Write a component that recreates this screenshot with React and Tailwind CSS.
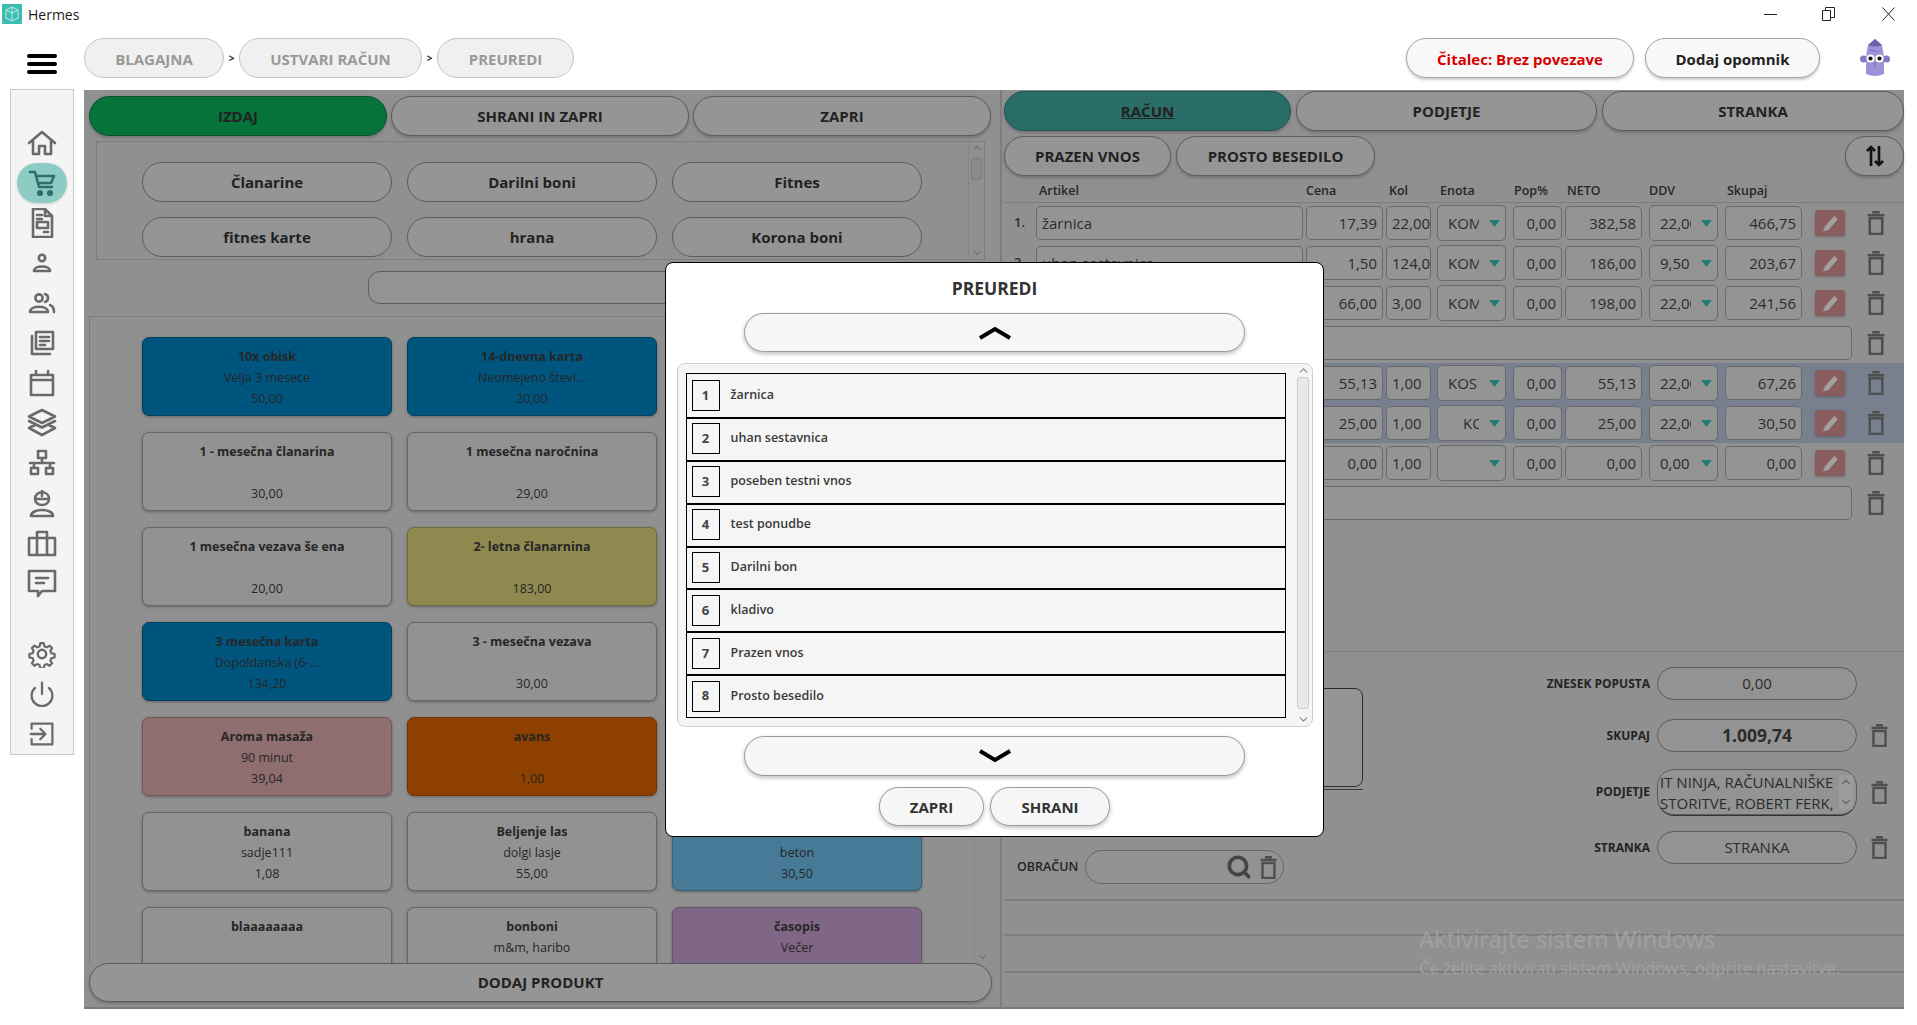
import { ChevronUp, ChevronDown, Search } from 'lucide-react';

const pillBtn = 'flex items-center justify-center rounded-[20px] border border-[#5c5c5c] bg-[#959595] font-bold text-[#222] shadow-[0_2px_3px_rgba(0,0,0,0.2)]';
const cell = 'flex h-[34px] items-center overflow-hidden rounded-[5px] border border-[#6a6a6a] bg-[#949494] text-[15px] text-[#2c2c2c]';

const blue = 'bg-[#00557e] border-[#00415f]';

const categories = ['Članarine', 'Darilni boni', 'Fitnes', 'fitnes karte', 'hrana', 'Korona boni'];

const products = [
  { t: '10x obisk', s: 'Velja 3 mesece', p: '50,00', c: blue },
  { t: '14-dnevna karta', s: 'Neomejeno števi...', p: '20,00', c: blue },
  {},
  { t: '1 - mesečna članarina', p: '30,00' },
  { t: '1 mesečna naročnina', p: '29,00' },
  {},
  { t: '1 mesečna vezava še ena', p: '20,00' },
  { t: '2- letna članarnina', p: '183,00', c: 'bg-[#8f8950] border-[#6f6a3a]' },
  {},
  { t: '3 mesečna karta', s: 'Dopoldanska (6-...', p: '134,20', c: blue },
  { t: '3 - mesečna vezava', p: '30,00' },
  {},
  { t: 'Aroma masaža', s: '90 minut', p: '39,04', c: 'bg-[#8f6e70] border-[#735658]' },
  { t: 'avans', p: '1,00', c: 'bg-[#8e4000] border-[#703200]' },
  {},
  { t: 'banana', s: 'sadje111', p: '1,08' },
  { t: 'Beljenje las', s: 'dolgi lasje', p: '55,00' },
  { s: 'beton', p: '30,50', c: 'bg-[#477a96] border-[#386177]' },
  { t: 'blaaaaaaaa' },
  { t: 'bonboni', s: 'm&m, haribo' },
  { t: 'časopis', s: 'Večer', c: 'bg-[#7f6785] border-[#68546d]' },
];

const rows = [
  { n: '1.', name: 'žarnica', v: ['17,39', '22,00', 'KOM', '0,00', '382,58', '22,00', '466,75'] },
  { n: '2.', name: 'uhan sestavnica', v: ['1,50', '124,00', 'KOM', '0,00', '186,00', '9,50', '203,67'] },
  { n: '3.', name: 'poseben testni vnos', v: ['66,00', '3,00', 'KOM', '0,00', '198,00', '22,00', '241,56'] },
  { text: true },
  { n: '5.', name: 'Darilni bon', band: true, v: ['55,13', '1,00', 'KOS', '0,00', '55,13', '22,00', '67,26'] },
  { n: '6.', name: 'kladivo', band: true, shift: true, v: ['25,00', '1,00', 'KOS', '0,00', '25,00', '22,00', '30,50'] },
  { n: '7.', name: 'Prazen vnos', v: ['0,00', '1,00', '', '0,00', '0,00', '0,00', '0,00'] },
  { text: true },
];

const sortItems = ['žarnica', 'uhan sestavnica', 'poseben testni vnos', 'test ponudbe', 'Darilni bon', 'kladivo', 'Prazen vnos', 'Prosto besedilo'];

const I = ({ children, w = 30, h = 30 }) => (
  <svg width={w} height={h} viewBox="0 0 30 30" fill="none" stroke="currentColor" strokeWidth="2.6" strokeLinejoin="round" strokeLinecap="round">
    {children}
  </svg>
);

const navIcons = [
  <I><path d="M2 15 15 4l13 11M6 12v14h6v-8h6v8h6V12" /></I>,
  <I><path d="M3 4h5l4 15h13M9 8h18l-3 7H11" /><circle cx="13" cy="25" r="1.8" fill="currentColor" /><circle cx="23" cy="25" r="1.8" fill="currentColor" /></I>,
  <I><path d="M6 1h12l7 7v21H6zM18 1v7h7M10 7h5M10 11h5M10 14h11v6H10zM17 24h4" /></I>,
  <I><circle cx="15" cy="10" r="3.2" /><path d="M7 23c0-6 16-6 16 0z" /></I>,
  <I><circle cx="12" cy="10" r="3.6" /><path d="M3 24c0-7 18-7 18 0zM18 6c4 1 4 7 0 8M23 17c3 1 4 3 4 7" /></I>,
  <I><path d="M9 4h17v17H9zM13 9h9M13 13h9M13 17h5M5 8v18h18" /></I>,
  <I><path d="M4 7h22v20H4zM4 12h22M9 3v4M21 3v4" /></I>,
  <I><path d="M15 2 28 8.5 15 15 2 8.5zM2 13l13 6.5L28 13M8 17l-6 3 13 7 13-7-6-3" /></I>,
  <I><path d="M11 3h8v7h-8zM15 10v5M3 15h24M7 15v5M23 15v5M4 20h7v6H4zM19 20h7v6h-7z" /></I>,
  <I><path d="M8 11c0-9 14-9 14 0zM15 3v5M8 11c0 8 14 8 14 0M4 28c0-8 22-8 22 0z" /></I>,
  <I><path d="M2 10h26v17H2zM10 10V4h10v6M10 10v17M20 10v17" /></I>,
  <I><path d="M2 3h26v20H15l-4 5v-5H2zM9 10h12M9 15h8" /></I>,
];

const navBottom = [
  <I w={28} h={28}><path d="M13 2h4l1 4 3 1 3-2 3 3-2 3 1 3 4 1v4l-4 1-1 3 2 3-3 3-3-2-3 1-1 4h-4l-1-4-3-1-3 2-3-3 2-3-1-3-4-1v-4l4-1 1-3-2-3 3-3 3 2 3-1z" transform="translate(1.5 1.5) scale(.9)" /><circle cx="15" cy="15" r="4.5" /></I>,
  <I w={26} h={26}><path d="M15 2v13M7 8a12 12 0 1 0 16 0" /></I>,
  <I w={26} h={26}><path d="M3 9V3h24v24H3v-6M2 15h17M13 9l6 6-6 6" /></I>,
];

const Trash = ({ size = 'h-[24px] w-[18px]' }) => (
  <svg className={size} viewBox="0 0 17 23" fill="none" stroke="#4f4f4f" strokeWidth="2.4">
    <path d="M.5 4h16M5 1.2h7" />
    <rect x="2.5" y="7" width="12" height="15" />
  </svg>
);

const Scrollbar = ({ thumb }) => (
  <div className="flex w-[16px] flex-col items-center border-l border-[#858585] bg-[#909090] text-[#5c5c5c]">
    <ChevronUp size={12} />
    <div className={`w-[11px] rounded-[2px] border border-[#7c7c7c] bg-[#8a8a8a] ${thumb}`} />
    <div className="flex-1" />
    <ChevronDown size={12} />
  </div>
);

const Product = ({ t, s, p, c }) => (
  <div className={`flex h-[79px] flex-col rounded-[7px] border pt-[8px] text-center text-[12.5px] leading-[21px] text-[#262626] shadow-[0_1px_3px_rgba(0,0,0,0.3)] ${c || 'border-[#666] bg-[#929292]'}`}>
    <div className="h-[21px] font-bold">{t}</div>
    <div className="h-[21px]">{s}</div>
    <div className="h-[21px]">{p}</div>
  </div>
);

const Num = ({ w, children }) => <div className={`${cell} ${w} justify-end pr-[5px]`}>{children}</div>;

const Select = ({ w, value, shift }) => (
  <div className={`${cell} ${w} relative h-[36px] border-[#5f5f5f] pl-[10px]`}>
    <div className={`w-[31px] overflow-hidden whitespace-nowrap ${shift ? 'pl-[15px]' : ''}`}>{value}</div>
    <svg className="absolute right-[5px] top-[14px] h-[7px] w-[11px]" viewBox="0 0 11 7"><path d="M0 0h11L5.5 7z" fill="#1f7d73" /></svg>
  </div>
);

const Row = ({ row }) => {
  if (row.text) {
    return (
      <div className="flex h-[40px] items-center">
        <div className={`${cell} ml-[32px] w-[816px]`} />
        <div className="ml-[15px]"><Trash /></div>
      </div>
    );
  }
  return (
    <div className={`flex h-[40px] items-center ${row.band ? 'bg-[#788090]' : ''}`}>
      <div className="w-[32px] pl-[10px] text-[13px] font-semibold text-[#2c2c2c]">{row.n}</div>
      <div className={`${cell} w-[267px] pl-[5px]`}>{row.name}</div>
      <div className="ml-[3px]"><Num w="w-[77px]">{row.v[0]}</Num></div>
      <div className="ml-[3px]">
        <div className={`${cell} w-[45px] whitespace-nowrap pl-[5px]`}>{row.v[1]}</div>
      </div>
      <div className="ml-[6px]"><Select w="w-[69px]" value={row.v[2]} shift={row.shift} /></div>
      <div className="ml-[7px]"><Num w="w-[49px]">{row.v[3]}</Num></div>
      <div className="ml-[3px]"><Num w="w-[77px]">{row.v[4]}</Num></div>
      <div className="ml-[7px]"><Select w="w-[69px]" value={row.v[5]} /></div>
      <div className="ml-[7px]"><Num w="w-[77px]">{row.v[6]}</Num></div>
      <div className="ml-[13px] flex h-[26px] w-[30px] items-center justify-center rounded-[3px] bg-[#895d5e] shadow-[0_1px_3px_rgba(0,0,0,0.25)]">
        <svg width="17" height="17" viewBox="0 0 16 16"><path d="M11.5 1l3.5 3L6 14l-5 1.5L2.5 11z" fill="#a3a0a0" /></svg>
      </div>
      <div className="ml-[22px]"><Trash /></div>
    </div>
  );
};

const SumRow = ({ label, children, trash = true, h = 'h-[33px]', className = '' }) => (
  <div className={`flex items-center ${className}`}>
    <div className="mr-[7px] text-right text-[12px] font-bold text-[#232323]">{label}</div>
    <div className={`flex w-[200px] items-center justify-center rounded-[17px] border border-[#5c5c5c] bg-[#939393] text-[15px] text-[#2c2c2c] ${h}`}>
      {children}
    </div>
    <div className="flex w-[44px] justify-center">{trash && <Trash size="h-[23px] w-[17px]" />}</div>
  </div>
);

const Mascot = () => (
  <svg width="30" height="38" viewBox="0 0 30 38">
    <path d="M15 0l7 6 2 12v17q-9 4-18 0V18l2-12z" fill="#9d92d8" />
    <path d="M15 0l7 6q-7 3-14 0z" fill="#6f62ad" />
    <path d="M10 11l9 2" stroke="#7f74b8" strokeWidth="1" />
    <circle cx="3.5" cy="20" r="3.5" fill="#8478c4" />
    <circle cx="26.5" cy="20" r="3.5" fill="#8478c4" />
    <circle cx="10.5" cy="19.5" r="4" fill="#fff" />
    <circle cx="19.5" cy="19.5" r="4" fill="#fff" />
    <circle cx="10.5" cy="19.5" r="2.1" fill="#111" />
    <circle cx="19.5" cy="19.5" r="2.1" fill="#111" />
    <path d="M15 23v5" stroke="#6a60a0" strokeWidth="1" />
  </svg>
);

const ModalBtn = ({ children, className }) => (
  <div className={`flex items-center justify-center rounded-[20px] border border-[#9a9a9a] bg-[#f6f6f6] font-bold text-[#333] shadow-[0_2px_4px_rgba(0,0,0,0.25)] ${className}`}>
    {children}
  </div>
);

export default function App() {
  return (
    <div className="relative h-[1025px] w-[1917px] overflow-hidden bg-white font-['Open_Sans',sans-serif]">
      {/* window title */}
      <div className="flex h-[28px] items-center">
        <div className="ml-[2px] flex h-[20px] w-[20px] items-center justify-center bg-[#3dbdb1]">
          <svg width="14" height="16" viewBox="0 0 14 16" fill="none" stroke="#bfeae5" strokeWidth="1"><path d="M7 1l6 3v8l-6 3-6-3V4zM7 1v14M1 4l6 3 6-3" /></svg>
        </div>
        <span className="ml-[6px] text-[14px] text-[#1a1a1a]">Hermes</span>
        <div className="ml-auto flex items-center text-[#222]">
          <div className="h-[1px] w-[13px] bg-[#222]" />
          <svg className="ml-[45px]" width="13" height="14" viewBox="0 0 13 14" fill="none" stroke="#222"><path d="M.5 3.5h8v10h-8zM3.5 3.5V.5h9v10h-4" /></svg>
          <svg className="ml-[47px] mr-[22px]" width="13" height="14" viewBox="0 0 13 14" fill="none" stroke="#222"><path d="M.5.5l12 13M12.5.5l-12 13" /></svg>
        </div>
      </div>

      {/* breadcrumb bar */}
      <div className="flex h-[62px] items-start pt-[10px]">
        <div className="ml-[27px] mt-[16px] flex w-[30px] flex-col gap-[4px]">
          <div className="h-[4px] rounded-full bg-black" />
          <div className="h-[4px] rounded-full bg-black" />
          <div className="h-[4px] rounded-full bg-black" />
        </div>
        <div className="ml-[27px] flex h-[40px] items-center text-[15px] font-bold text-[#999]">
          <div className="flex h-full w-[140px] items-center justify-center rounded-[20px] border border-[#c4c4c4] bg-[#f0f0f0] pt-[2px]">BLAGAJNA</div>
          <span className="w-[15px] text-center text-[10px] text-[#222]">&gt;</span>
          <div className="flex h-full w-[183px] items-center justify-center rounded-[20px] border border-[#c4c4c4] bg-[#f0f0f0] pt-[2px]">USTVARI RAČUN</div>
          <span className="w-[15px] text-center text-[10px] text-[#222]">&gt;</span>
          <div className="flex h-full w-[137px] items-center justify-center rounded-[20px] border border-[#c4c4c4] bg-[#f0f0f0] pt-[2px]">PREUREDI</div>
        </div>
        <div className="ml-auto flex h-[40px] items-center text-[15px] font-bold">
          <div className="flex h-full w-[228px] items-center justify-center rounded-[20px] border border-[#a5a5a5] bg-[#f8f8f8] pt-[2px] text-[#d60000] shadow-[0_2px_3px_rgba(0,0,0,0.2)]">Čitalec: Brez povezave</div>
          <div className="ml-[11px] flex h-full w-[175px] items-center justify-center rounded-[20px] border border-[#a5a5a5] bg-[#f8f8f8] pt-[2px] text-[#222] shadow-[0_2px_3px_rgba(0,0,0,0.2)]">Dodaj opomnik</div>
          <div className="ml-[40px] mr-[27px]"><Mascot /></div>
        </div>
      </div>

      <div className="flex items-start">
        {/* side navigation */}
        <div className="-mt-[1px] ml-[10px] flex h-[666px] w-[64px] flex-col items-center border border-[#c8c8c8] bg-[#f4f4f4] pt-[33px] text-[#6a6a6a]">
          {navIcons.map((icon, i) => (
            <div key={i} className={`flex h-[40px] w-[50px] shrink-0 items-center justify-center ${i === 1 ? 'rounded-[20px] bg-[#8dcbc5] text-[#2f6f6b] shadow-[0_1px_3px_rgba(0,0,0,0.15)]' : ''}`}>
              {icon}
            </div>
          ))}
          <div className="h-[31px] shrink-0" />
          {navBottom.map((icon, i) => (
            <div key={i} className="flex h-[40px] shrink-0 items-center justify-center">{icon}</div>
          ))}
        </div>

        {/* dimmed work area */}
        <div className="ml-[10px] flex h-[919px] w-[1820px] border-b-2 border-[#7a7a7a] bg-[#909090]">
          {/* left: products */}
          <div className="flex w-[917px] flex-col border-r border-[#7d7d7d] pl-[5px] pr-[9px] pt-[6px]">
            <div className="flex h-[40px] gap-[4px] text-[15px]">
              <div className={`${pillBtn} w-[298px] !border-[#04552c] !bg-[#06733b]`}>IZDAJ</div>
              <div className={`${pillBtn} w-[298px]`}>SHRANI IN ZAPRI</div>
              <div className={`${pillBtn} w-[298px]`}>ZAPRI</div>
            </div>

            <div className="ml-[7px] mt-[5px] flex h-[119px] w-[889px] border border-[#7e7e7e]">
              <div className="grid flex-1 grid-cols-[250px_250px_250px] content-start gap-x-[15px] gap-y-[15px] pl-[45px] pt-[20px]">
                {categories.map((c) => (
                  <div key={c} className={`${pillBtn} h-[40px] text-[15px] !shadow-none`}>{c}</div>
                ))}
              </div>
              <Scrollbar thumb="mt-[4px] h-[22px]" />
            </div>

            <div className="ml-[279px] mt-[11px] h-[33px] w-[550px] rounded-[12px] border border-[#5c5c5c] bg-[#939393]" />

            <div className="mt-[12px] flex h-[647px] w-[901px] overflow-hidden border-l border-t border-[#7e7e7e]">
              <div className="grid flex-1 grid-cols-[250px_250px_250px] content-start gap-x-[15px] gap-y-[16px] pl-[52px] pt-[20px]">
                {products.map((p, i) => <Product key={i} {...p} />)}
              </div>
              <Scrollbar thumb="mt-[2px] h-0 border-0" />
            </div>

            <div className={`${pillBtn} h-[39px] w-[903px] text-[15px]`}>DODAJ PRODUKT</div>
          </div>

          {/* right: receipt */}
          <div className="flex w-[903px] flex-col border-l border-[#7d7d7d] pl-[2px]">
            <div className="mt-[1px] flex h-[40px] text-[15px]">
              <div className={`${pillBtn} w-[287px] !border-[#1f5552] !bg-[#296c68] underline`}>RAČUN</div>
              <div className={`${pillBtn} ml-[5px] w-[301px]`}>PODJETJE</div>
              <div className={`${pillBtn} ml-[5px] w-[302px]`}>STRANKA</div>
            </div>
            <div className="mt-[5px] flex h-[40px] text-[15px]">
              <div className={`${pillBtn} w-[167px]`}>PRAZEN VNOS</div>
              <div className={`${pillBtn} ml-[5px] w-[199px]`}>PROSTO BESEDILO</div>
              <div className={`${pillBtn} ml-auto w-[59px]`}>
                <svg width="18" height="22" viewBox="0 0 18 22" fill="none" stroke="#111" strokeWidth="2.6">
                  <path d="M5 21V2M1 6l4-4 4 4M13 1v19M9 16l4 4 4-4" />
                </svg>
              </div>
            </div>

            <div className="h-[27px] border-b border-[#7d7d7d] text-[12.5px] font-semibold text-[#272727]">
              <div className="flex h-full items-end pb-[1px]">
                <span className="ml-[35px] w-[267px]">Artikel</span>
                <span className="w-[83px]">Cena</span>
                <span className="w-[51px]">Kol</span>
                <span className="w-[74px]">Enota</span>
                <span className="w-[53px]">Pop%</span>
                <span className="w-[82px]">NETO</span>
                <span className="w-[78px]">DDV</span>
                <span>Skupaj</span>
              </div>
            </div>

            {rows.map((row, i) => <Row key={i} row={row} />)}

            <div className="mt-[128px] flex h-[248px] border-t border-[#7d7d7d]">
              <div className="pl-[13px]">
                <div className="mt-[36px] h-[99px] w-[346px] rounded-[8px] border border-[#2d2d2d] bg-[#959595]" />
                <div className="mt-[2px] h-[1px] w-[346px] bg-[#3a3a3a]" />
                <div className="mt-[60px] flex items-center">
                  <span className="text-[12.5px] font-semibold text-[#232323]">OBRAČUN</span>
                  <div className="ml-[7px] flex h-[34px] w-[199px] items-center justify-end gap-[8px] rounded-[17px] border border-[#666] bg-[#929292] pr-[6px]">
                    <Search size={26} color="#444" strokeWidth={3.4} />
                    <Trash size="h-[23px] w-[17px]" />
                  </div>
                </div>
              </div>
              <div className="ml-auto flex flex-col items-end pr-[3px] pt-[15px]">
                <SumRow label="ZNESEK POPUSTA" trash={false}>0,00</SumRow>
                <SumRow label="SKUPAJ" className="mt-[19px]"><span className="text-[17.5px] font-bold">1.009,74</span></SumRow>
                <SumRow label="PODJETJE" h="h-[46px] shadow-[0_2px_0_-1px_#333]" className="mt-[17px]">
                  <div className="flex h-full w-full overflow-hidden pl-[2px] text-[15px] leading-[21px]">
                    <div className="flex-1 whitespace-nowrap pt-[2px]">IT NINJA, RAČUNALNIŠKE<br />STORITVE, ROBERT FERK,</div>
                    <div className="my-[5px] mr-[3px] flex w-[14px] flex-col justify-between bg-[#9c9c9c] text-[#666]">
                      <ChevronUp size={14} /><ChevronDown size={14} />
                    </div>
                  </div>
                </SumRow>
                <SumRow label="STRANKA" className="mt-[16px]">STRANKA</SumRow>
              </div>
            </div>
            <div className="h-[35px] border-t-2 border-[#7d7d7d]" />
            <div className="h-[37px] border-t-2 border-[#7d7d7d]" />
            <div className="h-[35px] border-t-2 border-[#7d7d7d]" />
          </div>
        </div>
      </div>

      {/* windows watermark */}
      <div className="absolute left-[1419px] top-[923px] font-['Noto_Sans',sans-serif] text-[#a0a0a0]">
        <div className="text-[23.6px] leading-[32px]">Aktivirajte sistem Windows</div>
        <div className="text-[16.6px] leading-[26px]">Če želite aktivirati sistem Windows, odprite nastavitve.</div>
      </div>

      {/* dialog */}
      <div className="absolute left-[665px] top-[262px] flex h-[575px] w-[659px] flex-col items-center rounded-[8px] border border-black bg-white">
        <div className="flex h-[50px] items-center text-[17.5px] font-bold text-[#333]">PREUREDI</div>
        <ModalBtn className="h-[39px] w-[501px]">
          <svg width="34" height="14" viewBox="0 0 34 14" fill="none" stroke="#000" strokeWidth="4"><path d="M2 12 17 3l15 9" /></svg>
        </ModalBtn>
        <div className="mt-[11px] flex h-[364px] w-[636px] rounded-[8px] border border-[#cfcfcf] bg-[#f5f5f5] pl-[8px] pt-[9px]">
          <div className="h-[345px] w-[600px] border border-black">
            {sortItems.map((item, i) => (
              <div key={item} className={`flex h-[42.9px] items-center pl-[5px] ${i ? 'border-t-2 border-black pb-[1px]' : ''}`}>
                <div className="flex h-[31px] w-[28px] items-center justify-center border border-black text-[13px] font-bold text-[#444]">{i + 1}</div>
                <span className="ml-[11px] text-[12.5px] font-semibold text-[#3a3a3a]">{item}</span>
              </div>
            ))}
          </div>
          <div className="-mt-[9px] ml-auto flex w-[17px] flex-col items-center text-[#8a8a8a]">
            <ChevronUp size={13} />
            <div className="h-[332px] w-[12px] rounded-[3px] border border-[#cdcdcd] bg-[#e8e8e8]" />
            <ChevronDown size={13} className="mt-[4px]" />
          </div>
        </div>
        <ModalBtn className="mt-[9px] h-[40px] w-[501px]">
          <svg width="34" height="14" viewBox="0 0 34 14" fill="none" stroke="#000" strokeWidth="4"><path d="M2 2l15 9 15-9" /></svg>
        </ModalBtn>
        <div className="mt-[11px] flex gap-[6px] text-[15px]">
          <ModalBtn className="h-[39px] w-[105px] pt-[2px]">ZAPRI</ModalBtn>
          <ModalBtn className="h-[39px] w-[120px] pt-[2px]">SHRANI</ModalBtn>
        </div>
      </div>
    </div>
  );
}
